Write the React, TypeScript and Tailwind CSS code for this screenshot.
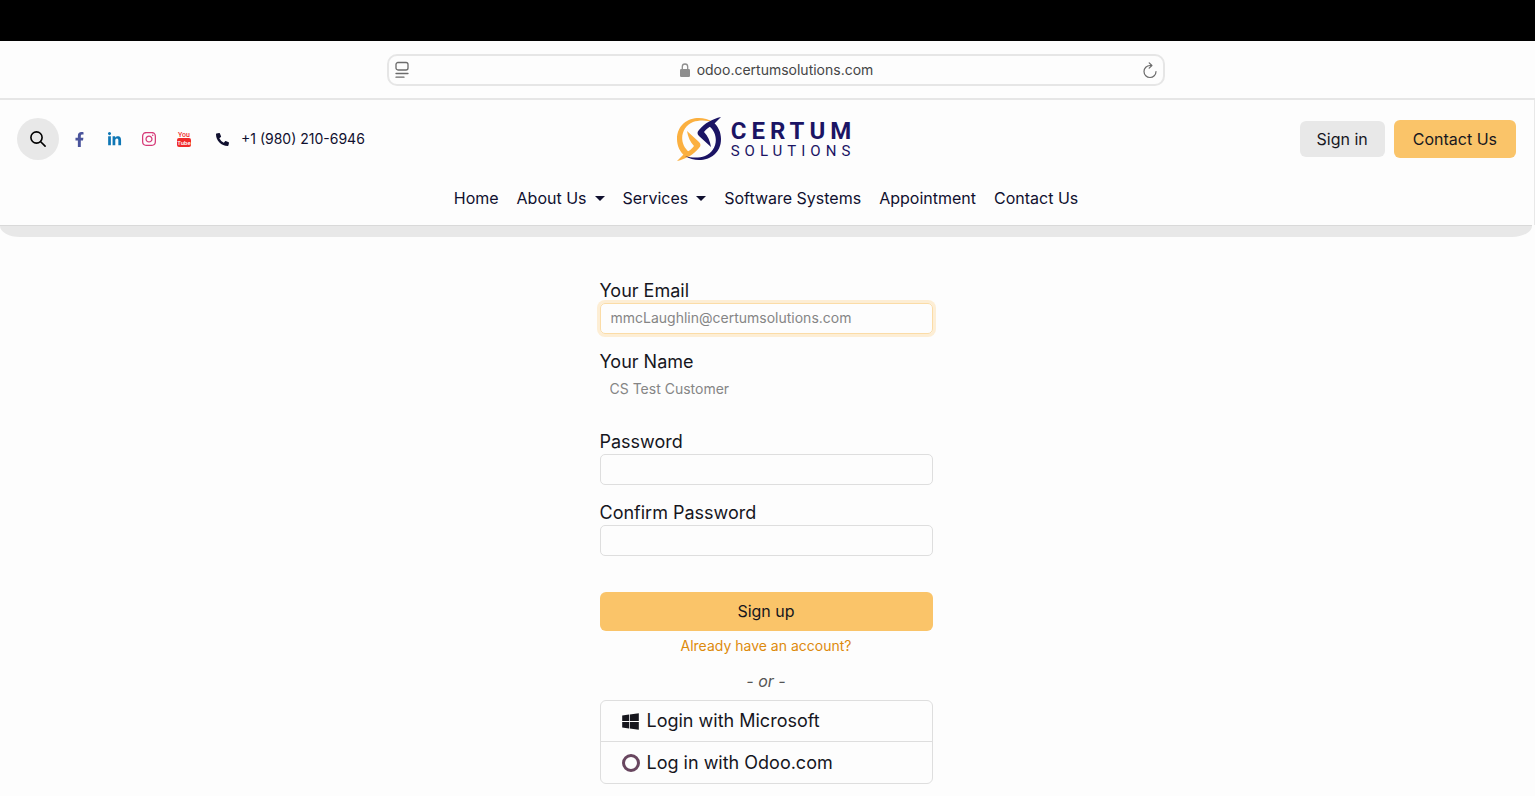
import React from "react";
import { FaFacebookF, FaLinkedinIn, FaInstagram, FaPhoneAlt, FaWindows } from "react-icons/fa";

const navLinks = [
  { label: "Home", menu: false },
  { label: "About Us", menu: true },
  { label: "Services", menu: true },
  { label: "Software Systems", menu: false },
  { label: "Appointment", menu: false },
  { label: "Contact Us", menu: false },
];

const AddressBar = () => {
  return (
    <div className="flex justify-center border-b-2 border-[#e6e6e6] pt-[13px] pb-3 pl-4">
      <div className="flex h-8 w-full max-w-[778px] items-center justify-between rounded-[10px] border-2 border-[#e6e6e6] px-[5px]">
        <button aria-label="Page menu" className="text-[#6b6b6b]">
          <svg width="16" height="18" viewBox="0 0 16 18" fill="none" stroke="currentColor" strokeWidth="1.3" strokeLinecap="round">
            <rect x="2" y="1.5" width="12" height="7.5" rx="2" />
            <path d="M2 12.5h12M2 16.2h8" />
          </svg>
        </button>
        <div className="flex items-center gap-[7px] text-sm text-[#454545]">
          <svg width="10" height="14" viewBox="0 0 10 14">
            <path d="M2.3 7V3.7a2.7 2.7 0 0 1 5.4 0V7" fill="none" stroke="#8e8e8e" strokeWidth="1.3" />
            <rect y="6" width="10" height="8" rx="1.3" fill="#8e8e8e" />
          </svg>
          <span>odoo.certumsolutions.com</span>
        </div>
        <button aria-label="Reload" className="text-[#6b6b6b]">
          <svg width="14" height="17" viewBox="0 0 14 17" fill="none" stroke="currentColor" strokeWidth="1.2" strokeLinecap="round" strokeLinejoin="round">
            <path d="M8.500 3.500H7A6 6 0 1 0 13 9.500M6.200 .8 8.900 3.500 6.200 6.200" />
          </svg>
        </button>
      </div>
    </div>
  );
};

const Logo = () => {
  return (
    <a href="#" aria-label="Certum Solutions" className="flex items-center gap-2 text-[#1b1464]">
      <svg width="46" height="44" viewBox="0 0 46 44">
        <g fill="#fbb040">
          <path d="M36 5C22-4 0 2 0 22c0 7 3 13 8 17l4-4C1 26 4 10 16 5c6-2 13-2 20 0Z" />
          <path d="M10 14l12 11q3 3 0 6C16 38 9 42 0 44l8-8c4-2 7-4 9-7-4-4-6-9-7-15Z" />
        </g>
        <g fill="#1b1464" transform="rotate(180 22 22)">
          <path d="M36 5C22-4 0 2 0 22c0 7 3 13 8 17l4-4C1 26 4 10 16 5c6-2 13-2 20 0Z" />
          <path d="M10 14l12 11q3 3 0 6C16 38 9 42 0 44l8-8c4-2 7-4 9-7-4-4-6-9-7-15Z" />
        </g>
      </svg>
      <span className="flex flex-col font-[Roboto,sans-serif]">
        <span className="text-2xl leading-6 font-bold tracking-[5px]">CERTUM</span>
        <span className="text-[15px] leading-4 tracking-[5px]">SOLUTIONS</span>
      </span>
    </a>
  );
};

const YoutubeIcon = () => {
  return (
    <svg width="14" height="16" viewBox="0 0 14 16" fontFamily="Roboto, sans-serif" textAnchor="middle">
      <text x="7" y="6" fontSize="7" fontWeight="500" fill="#f02a2a">You</text>
      <rect y="7" width="14" height="9" rx="2" fill="#f02a2a" />
      <text x="7" y="14" fontSize="6" fontWeight="500" fill="#fff">Tube</text>
    </svg>
  );
};

const Header = () => {
  return (
    <header className="border-r border-[#e8e8e8] pr-[2px] text-[#10102f]">
      <div className="grid grid-cols-[1fr_auto_1fr] items-center pt-[17px] pr-4 pl-[17px]">
        <div className="flex items-center">
          <button aria-label="Search" className="flex size-[42px] items-center justify-center rounded-full bg-[#e8e8e8] text-black">
            <svg width="16" height="16" viewBox="0 0 16 16" fill="none" stroke="currentColor" strokeWidth="1.6" strokeLinecap="round">
              <circle cx="6.5" cy="6.5" r="5.6" />
              <path d="m10.7 10.7 4.4 4.4" />
            </svg>
          </button>
          <div className="ml-3 flex items-center gap-[19px]">
            <a href="#" aria-label="Facebook" className="flex w-4 justify-center text-[#4a549c]"><FaFacebookF size={15} /></a>
            <a href="#" aria-label="LinkedIn" className="flex w-4 justify-center text-[#0f77b5]"><FaLinkedinIn size={15} /></a>
            <a href="#" aria-label="Instagram" className="flex w-4 justify-center text-[#d63a78]"><FaInstagram size={16} /></a>
            <a href="#" aria-label="YouTube" className="flex w-4 justify-center"><YoutubeIcon /></a>
          </div>
          <a href="tel:+19802106946" className="ml-6 flex items-center gap-3 text-sm">
            <FaPhoneAlt size={13} />
            <span>+1 (980) 210-6946</span>
          </a>
        </div>
        <Logo />
        <div className="flex items-center justify-end gap-[9px] text-base text-[#17171f]">
          <a href="#" className="rounded-md bg-[#e8e8e8] px-[17px] py-[6px]">Sign in</a>
          <a href="#" className="rounded-md bg-[#fac469] px-[19px] py-[7px]">Contact Us</a>
        </div>
      </div>
      <nav className="flex justify-center gap-[18px] pt-[25px] pb-[15px] text-base">
        {navLinks.map((link) => (
          <a key={link.label} href="#" className="flex items-center gap-2">
            {link.label}
            {link.menu && <span className="border-x-[5px] border-t-[5px] border-x-transparent border-t-current" />}
          </a>
        ))}
      </nav>
    </header>
  );
};

const labelClass = "block text-lg leading-6";
const inputClass = "block h-[31px] w-full rounded-[5px] border border-[#dedede] px-[10px] text-sm text-[#858585] outline-none";

const SignupForm = () => {
  return (
    <form className="mx-auto w-[333px] pt-[42px] text-[#16161d]">
      <label htmlFor="email" className={labelClass}>Your Email</label>
      <input id="email" type="email" defaultValue="mmcLaughlin@certumsolutions.com" className="block h-[31px] w-full rounded-[5px] border border-[#fbdca7] px-[10px] pb-[2px] text-sm text-[#858585] ring-3 ring-[#fdeed5] outline-none" />
      <label htmlFor="name" className={`${labelClass} mt-4`}>Your Name</label>
      <input id="name" type="text" defaultValue="CS Test Customer" className="block h-[31px] w-full bg-transparent px-[10px] pb-[2px] text-sm text-[#858585] outline-none" />
      <label htmlFor="password" className={`${labelClass} mt-[25px]`}>Password</label>
      <input id="password" type="password" className={inputClass} />
      <label htmlFor="confirm" className={`${labelClass} mt-4`}>Confirm Password</label>
      <input id="confirm" type="password" className={inputClass} />
      <button type="button" className="mt-9 block h-[39px] w-full rounded-md bg-[#fac469] pb-[2px] text-base">Sign up</button>
      <div className="flex flex-col items-center">
        <a href="#" className="mt-[5px] text-sm text-[#dd8a0c]">Already have an account?</a>
        <em className="mt-[13px] text-base text-[#555]">- or -</em>
      </div>
      <div className="mt-[7px] divide-y divide-[#dedede] rounded-md border border-[#dedede] text-lg">
        <a href="#" className="flex h-[41px] items-center gap-[6px] pl-5">
          <span className="flex w-5 justify-center"><FaWindows size={19} /></span>
          Login with Microsoft
        </a>
        <a href="#" className="flex h-[41px] items-center gap-[6px] pl-5">
          <span className="flex w-5 justify-center">
            <span className="size-[18px] rounded-full border-3 border-[#68465f]" />
          </span>
          Log in with Odoo.com
        </a>
      </div>
    </form>
  );
};

const App = () => {
  return (
    <div className="min-h-screen bg-[#fdfdfd] font-[Inter,sans-serif]">
      <div className="h-[41px] bg-black" />
      <AddressBar />
      <Header />
      <div className="mr-[3px] h-3 rounded-[0_0_20px_20px/0_0_11px_11px] border-t border-[#d9d9d9] bg-[#e8e8e8]" />
      <div className="pr-[3px]">
        <SignupForm />
      </div>
    </div>
  );
};

export default App;
